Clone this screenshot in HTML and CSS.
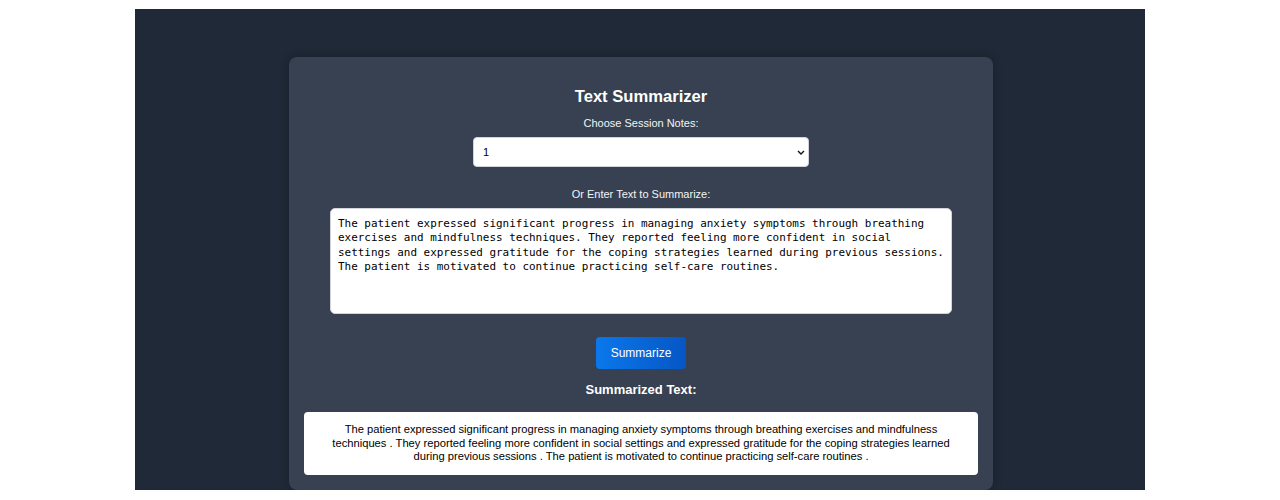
FILE: index.html
```html
<!DOCTYPE html>
<html lang="en">
<head>
<meta charset="utf-8">
<title>Text Summarizer</title>
<link rel="stylesheet" href="styles.css">
</head>
<body>
<div class="page">
  <div class="card">
    <h2 class="title">Text Summarizer</h2>
    <label class="label first" for="notes">Choose Session Notes:</label>
    <div class="row">
      <select id="notes" class="select">
        <option>1</option>
        <option>2</option>
        <option>3</option>
      </select>
    </div>
    <label class="label second" for="input">Or Enter Text to Summarize:</label>
    <div class="row">
      <textarea id="input" class="textarea">The patient expressed significant progress in managing anxiety symptoms through breathing exercises and mindfulness techniques. They reported feeling more confident in social settings and expressed gratitude for the coping strategies learned during previous sessions. The patient is motivated to continue practicing self-care routines.</textarea>
    </div>
    <div class="row">
      <button class="btn" type="button">Summarize</button>
    </div>
    <h3 class="subtitle">Summarized Text:</h3>
    <div class="result">The patient expressed significant progress in managing anxiety symptoms through breathing exercises and mindfulness techniques . They reported feeling more confident in social settings and expressed gratitude for the coping strategies learned during previous sessions . The patient is motivated to continue practicing self-care routines .</div>
  </div>
</div>
</body>
</html>
```
FILE: styles.css
```css
* { box-sizing: border-box; }
html, body { margin: 0; padding: 0; background: #ffffff; }
body { font-family: "Liberation Sans", Arial, sans-serif; }

.page {
  width: 1010px;
  height: 481px;
  margin: 9px auto 0;
  background: #1f2937;
  padding: 48px 0 0 154px;
}

.card {
  width: 704px;
  background: #374151;
  border-radius: 8px;
  padding: 15px;
  text-align: center;
  color: #ffffff;
  box-shadow: 0 0 10px rgba(0, 0, 0, 0.25);
}

.title {
  margin: 15px 0 0;
  font-size: 16.6px;
  line-height: 19px;
  font-weight: bold;
}

.label {
  display: block;
  font-size: 11px;
  line-height: 13px;
  margin: 20px 0 7px;
  color: #f3f4f6;
}
.label.first { margin-top: 11px; }
.label.second { margin-top: 21px; }

.row { display: flex; justify-content: center; }

.select {
  -webkit-appearance: none;
  appearance: none;
  width: 336px;
  height: 30px;
  border: 1px solid #d1d5db;
  border-radius: 4px;
  background: #ffffff url("data:image/svg+xml;utf8,<svg xmlns='http://www.w3.org/2000/svg' width='8' height='5' viewBox='0 0 8 5'><path d='M1 1l3 3 3-3' fill='none' stroke='%23111' stroke-width='1.4'/></svg>") no-repeat right 3px center;
  color: #000000;
  font-family: "Liberation Sans", Arial, sans-serif;
  font-size: 11px;
  padding: 0 14px 0 9px;
  margin: 0;
}

.textarea {
  display: block;
  width: 622px;
  height: 106px;
  border: 1px solid #d1d5db;
  border-radius: 5px;
  background: #ffffff;
  color: #000000;
  font-family: "DejaVu Sans Mono", "Liberation Mono", monospace;
  font-size: 10.95px;
  line-height: 14.3px;
  padding: 8px 4px 7px 7px;
  margin: 0;
  resize: none;
  overflow: hidden;
}

.btn {
  margin-top: 23px;
  width: 90px;
  height: 32px;
  border: none;
  border-radius: 4px;
  background: linear-gradient(90deg, #0a78ec, #0656c4);
  color: #ffffff;
  font-family: "Liberation Sans", Arial, sans-serif;
  font-size: 12px;
  padding: 0;
}

.subtitle {
  margin: 13px 0 0;
  font-size: 13px;
  line-height: 15px;
  font-weight: bold;
}

.result {
  margin-top: 15px;
  background: #ffffff;
  color: #000000;
  border-radius: 4px;
  font-size: 11.2px;
  line-height: 13.6px;
  padding: 11px 20px;
  text-align: center;
}
```
